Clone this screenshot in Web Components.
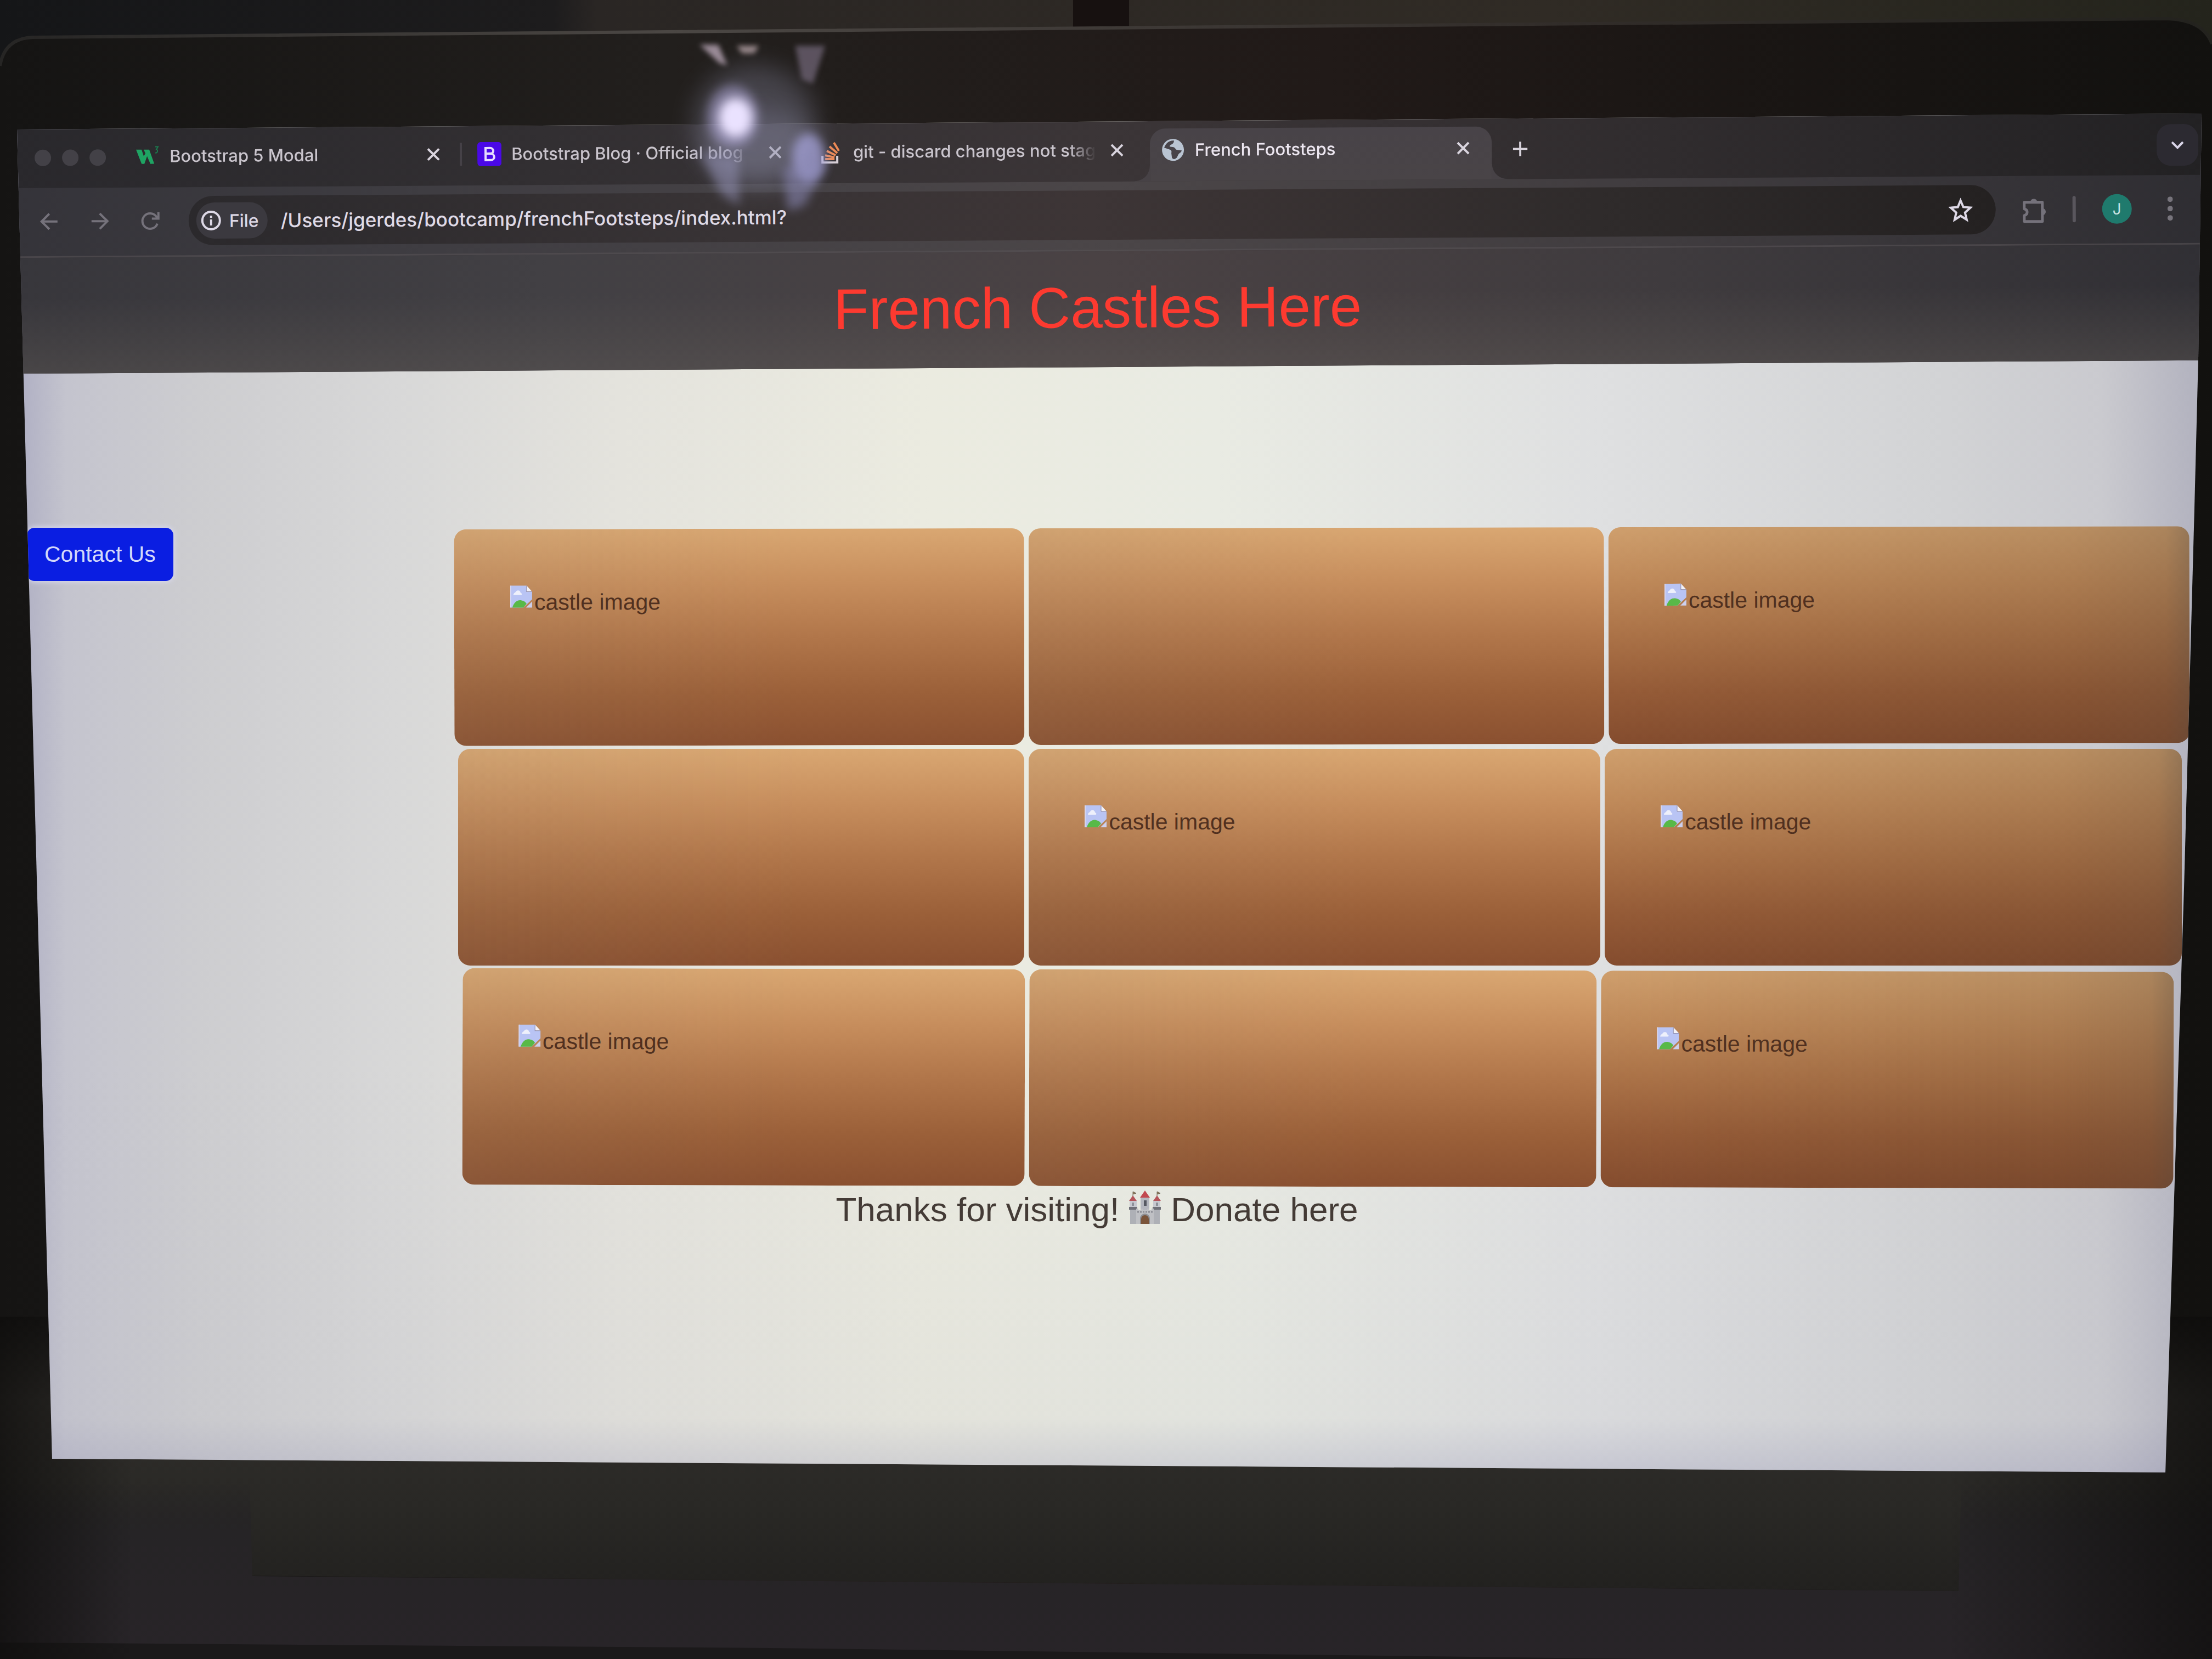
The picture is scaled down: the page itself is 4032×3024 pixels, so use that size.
<!DOCTYPE html>
<html lang="en">
<head>
<meta charset="utf-8">
<title>French Footsteps</title>
<style>
  html, body { margin: 0; }
  body { background: #161311; font-family: "Liberation Sans", Arial, sans-serif; color: #453b36; }
</style>
</head>
<body>
<laptop-scene>
  <laptop-screen>
    <browser-chrome slot="chrome">
      <browser-tab slot="tabs" icon="w3">Bootstrap 5 Modal</browser-tab>
      <browser-tab slot="tabs" icon="bootstrap" divided>Bootstrap Blog · Official blog</browser-tab>
      <browser-tab slot="tabs" icon="stack">git - discard changes not staged</browser-tab>
      <browser-tab slot="tabs" icon="globe" active>French Footsteps</browser-tab>
      <site-header slot="header">French Castles Here</site-header>
    </browser-chrome>
    <castle-page>
      <contact-button slot="aside">Contact Us</contact-button>
      <castle-row tilt="up">
        <castle-card alt="castle image"></castle-card>
        <castle-card></castle-card>
        <castle-card alt="castle image" dim></castle-card>
      </castle-row>
      <castle-row narrow="1">
        <castle-card></castle-card>
        <castle-card alt="castle image"></castle-card>
        <castle-card alt="castle image" dim></castle-card>
      </castle-row>
      <castle-row narrow="2" tilt="down">
        <castle-card alt="castle image"></castle-card>
        <castle-card></castle-card>
        <castle-card alt="castle image" dim></castle-card>
      </castle-row>
      <site-footer slot="footer"></site-footer>
    </castle-page>
  </laptop-screen>
</laptop-scene>

<script>
const define = (name, html, setup) => {
  const template = document.createElement('template');
  template.innerHTML = html;
  customElements.define(name, class extends HTMLElement {
    constructor() {
      super();
      this.attachShadow({ mode: 'open' }).append(template.content.cloneNode(true));
    }
    connectedCallback() { if (setup) setup(this, this.shadowRoot); }
  });
};

const ICONS = {
  w3: `<svg viewBox="0 0 44 44"><path d="M1 10h10l4 12 3-5-3-7h10l9 26h-7l-6-14-5 14h-5z" fill="#1fa463"/><path d="M36 5h5l-3 5c3 0 3 7-2 6" fill="none" stroke="#1b7a4e" stroke-width="2"/></svg>`,
  bootstrap: `<svg viewBox="0 0 44 44"><rect width="44" height="44" rx="6" fill="#4a08e8"/><path d="M15 11h8c8 0 8 10 1 10h-9 9c9 1 9 12 0 12h-9z" fill="none" stroke="#e6dcff" stroke-width="4"/></svg>`,
  stack: `<svg viewBox="0 0 44 44"><path d="M6 29v12h27V29" fill="none" stroke="#d8cfd6" stroke-width="4"/><g stroke="#ef8a55" stroke-width="4"><path d="M11 35h17M11 28l17 4M14 20l16 8M19 12l14 12M27 5l9 15"/></g></svg>`,
  globe: `<svg viewBox="0 0 44 44"><circle cx="22" cy="22" r="20" fill="#b9c4d2"/><path d="M24 5c-8-1-15 4-18 13l9 3c4 1 5 3 4 7l1 8c2 4 6 3 9 0l3-6c2-3 5-3 6-7l-8-1c-4 0-3-4-7-5l-7-1c0-5 8-3 8-11z" fill="#474349"/></svg>`
};

define('laptop-scene', `
<style>
  :host { display: flex; flex-direction: column; position: relative; min-height: 100vh; overflow: hidden; box-sizing: border-box; padding-top: 207px; isolation: isolate; }
  .desk { position: absolute; inset: 0; width: 100%; height: 100%; z-index: -1; }
  .glare { position: absolute; left: 28%; top: 2%; width: 15%; height: 13%; pointer-events: none; }
</style>
<svg class="desk" viewBox="0 0 4032 3024" preserveAspectRatio="none" aria-hidden="true">
  <defs>
    <linearGradient id="wall"><stop offset="0" stop-color="#151618"/><stop offset=".25" stop-color="#1d1c1d"/><stop offset=".27" stop-color="#2a2624"/><stop offset=".7" stop-color="#302b25"/><stop offset="1" stop-color="#24241c"/></linearGradient>
    <linearGradient id="lid"><stop offset="0" stop-color="#151413"/><stop offset=".3" stop-color="#221f1d"/><stop offset=".6" stop-color="#211a18"/><stop offset="1" stop-color="#12110f"/></linearGradient>
    <linearGradient id="rim"><stop offset="0" stop-color="#262524"/><stop offset=".3" stop-color="#4b4744"/><stop offset=".7" stop-color="#322d2a"/><stop offset="1" stop-color="#23221e"/></linearGradient>
    <linearGradient id="chin" x2="0" y2="1"><stop offset="0" stop-color="#302e2b" stop-opacity="0"/><stop offset=".3" stop-color="#302e2b"/><stop offset=".7" stop-color="#292825"/><stop offset="1" stop-color="#22211f"/></linearGradient>
    <linearGradient id="base" x2="0" y2="1"><stop offset="0" stop-color="#242224" stop-opacity="0"/><stop offset=".3" stop-color="#262426"/><stop offset="1" stop-color="#282428"/></linearGradient>
    <linearGradient id="sides"><stop offset="0" stop-color="#0d0c0b" stop-opacity=".7"/><stop offset=".06" stop-color="#0d0c0b" stop-opacity="0"/><stop offset=".88" stop-color="#0d0c0b" stop-opacity="0"/><stop offset="1" stop-color="#0d0c0b" stop-opacity=".7"/></linearGradient>
  </defs>
  <rect width="4032" height="3024" fill="url(#wall)"/>
  <path d="M1956 0h102v50h-102z" fill="#171110"/>
  <path d="M0 3024V120Q8 68 60 66L3950 32Q4016 34 4032 80V3024z" fill="url(#lid)"/>
  <path d="M0 120Q8 70 60 68L3950 34Q4016 36 4032 80" fill="none" stroke="url(#rim)" stroke-width="6"/>
  <path d="M0 2400H4032V2903L3570 2900 460 2872 0 2868z" fill="url(#chin)"/>
  <path d="M0 2700L455 2700 460 2873 3570 2900 3575 2700 4032 2700V3024H0z" fill="url(#base)"/>
  <path d="M0 2994L1400 3004 3000 3024H0z" fill="#1b191a"/>
  <path d="M0 2400H4032V3024H0z" fill="url(#sides)"/>
</svg>
<slot></slot>
<svg class="glare" viewBox="0 0 600 400" preserveAspectRatio="none" aria-hidden="true">
  <defs>
    <filter id="soft" x="-1" y="-1" width="3" height="3"><feGaussianBlur stdDeviation="9"/></filter>
    <filter id="tiny" x="-1" y="-1" width="3" height="3"><feGaussianBlur stdDeviation="5"/></filter>
    <filter id="wide" x="-1" y="-1" width="3" height="3"><feGaussianBlur stdDeviation="22"/></filter>
  </defs>
  <ellipse cx="245" cy="165" rx="110" ry="105" fill="#8f90aa" opacity=".32" filter="url(#wide)"/>
  <ellipse cx="255" cy="215" rx="100" ry="75" fill="#8f90aa" opacity=".3" filter="url(#wide)"/>
  <ellipse cx="205" cy="155" rx="46" ry="58" fill="#b0a8da" opacity=".5" filter="url(#soft)"/>
  <ellipse cx="210" cy="157" rx="30" ry="36" fill="#eae2ff" filter="url(#soft)"/>
  <ellipse cx="342" cy="232" rx="30" ry="46" fill="#aaa8e2" opacity=".7" filter="url(#soft)"/>
  <path d="M145 220l70 10 2 90-32-20z" fill="#9a98be" opacity=".5" filter="url(#soft)"/>
  <path d="M295 250l80-10-40 80-30 10z" fill="#8f8dbb" opacity=".55" filter="url(#soft)"/>
  <path d="M145 22h34l16 38-14-4z" fill="#b8a6b6" opacity=".8" filter="url(#tiny)"/>
  <path d="M212 24h40l-8 14h-22z" fill="#b3a0a4" opacity=".8" filter="url(#tiny)"/>
  <path d="M318 24h54l-22 70-20-8z" fill="#75697c" opacity=".7" filter="url(#tiny)"/>
</svg>`);

define('laptop-screen', `
<style>
  :host {
    display: flex; flex-direction: column; overflow: hidden;
    clip-path: polygon(31px 29px, calc(100% - 19px) 0, calc(100% - 25px) 18%, calc(100% - 32px) 29%, calc(100% - 51px) 57%, calc(100% - 85px) 100%, 95px calc(100% - 25px));
    background:
      linear-gradient(to bottom, rgba(190,190,200,0) 70%, rgba(180,180,190,.14) 96%, rgba(150,150,180,.35)),
      linear-gradient(to right, #b0b0c4 1%, #c4c4ce 3%, #cdcdd0 9%, #d8d8d8 18%, #e4e3dd 28%, #ebebe0 42%, #e9ebe3 55%, #dfe0e1 72%, #d2d3d5 88%, #cacacf 95%, #b4b4c0 99%);
  }
</style>
<slot name="chrome"></slot><slot></slot>`);

define('browser-chrome', `
<style>
  :host { display: block; transform: rotate(-0.35deg); margin: -20px -20px 0; padding-top: 20px; font-family: Inter, Roboto, sans-serif;
    background: linear-gradient(to right, #29282c, #322f32 25%, #3b3537 50%, #302c2e 75%, #222123);
    --bar: linear-gradient(to right, #343339, #3f3d42 20%, #4b4648 50%, #403c3f 75%, #2e2d32);
  }
  button { appearance: none; border: 0; background: none; padding: 0; margin: 0; display: grid; place-items: center; flex: none; color: inherit; }
  svg { display: block; fill: none; stroke: currentColor; stroke-width: 4; }
  .strip { display: flex; align-items: stretch; padding: 14px 44px 0 84px; height: 110px; }
  .lights { display: flex; align-items: center; gap: 20px; margin-right: 34px; }
  .lights i { width: 30px; height: 30px; border-radius: 50%; background: #434147; }
  .add { width: 104px; color: #d8d3dc; }
  .search { margin-left: auto; align-self: center; width: 76px; height: 76px; border-radius: 26px; background: #2c2a31; color: #d8d3e6; }
  .bar { display: flex; align-items: center; gap: 48px; padding: 16px 74px 18px 88px; background: var(--bar); border-bottom: 3px solid #57525599; color: #75727b; }
  .bar button { width: 44px; height: 44px; }
  .omni { flex: 1; display: flex; align-items: center; height: 90px; border-radius: 45px; padding: 0 42px 0 14px; gap: 24px; color: #ddd8e6;
    background: linear-gradient(to right, #2b292c, #383335 30%, #3d3536 50%, #2f2b2b 78%, #242121); }
  .chip { display: flex; align-items: center; gap: 14px; height: 66px; padding: 0 16px 0 8px; border-radius: 33px; background: #3b393f; font-size: 32px; font-weight: 500; }
  input { flex: 1; min-width: 0; border: 0; background: none; padding: 0; font: 500 35px/48px Inter, Roboto, sans-serif; color: #dfdae6; outline: 0; }
  .rule { width: 6px; height: 48px; border-radius: 3px; background: #59565d; }
  .bar .avatar { width: 54px; height: 54px; border-radius: 50%; background: #1f7a6d; color: #c9e2e0; font: 400 28px/32px Inter, sans-serif; }
</style>
<div class="strip">
  <div class="lights"><i></i><i></i><i></i></div>
  <slot name="tabs"></slot>
  <button class="add" aria-label="New tab"><svg width="30" height="30" viewBox="0 0 32 32"><path d="M16 2v28M2 16h28"/></svg></button>
  <button class="search" aria-label="Search tabs"><svg width="28" height="28" viewBox="0 0 28 28"><path d="M4 9l10 10L24 9"/></svg></button>
</div>
<div class="bar">
  <button aria-label="Back"><svg width="34" height="34" viewBox="0 0 34 34"><path d="M32 17H4M17 3L3 17l14 14"/></svg></button>
  <button aria-label="Forward"><svg width="34" height="34" viewBox="0 0 34 34"><path d="M2 17h28M17 3l14 14-14 14"/></svg></button>
  <button aria-label="Reload"><svg width="38" height="38" viewBox="0 0 38 38"><path d="M32 24a14 14 0 1 1-2-13l4 4M34 3v12H22"/></svg></button>
  <div class="omni">
    <span class="chip"><svg width="38" height="38" viewBox="0 0 38 38"><circle cx="19" cy="19" r="16"/><path d="M19 17v11M19 10v4"/></svg>File</span>
    <input type="text" aria-label="Address" value="/Users/jgerdes/bootcamp/frenchFootsteps/index.html?">
    <button aria-label="Bookmark"><svg width="44" height="44" viewBox="0 0 44 44"><path d="M22 5l5 12 13 1-10 9 3 13-11-7-11 7 3-13-10-9 13-1z"/></svg></button>
  </div>
  <button aria-label="Extensions"><svg width="46" height="50" viewBox="0 0 46 50" stroke-linejoin="round"><path d="M4 9H37V44H4V33c7-2 7-10 0-12z" stroke-width="5"/><path d="M16 7a6 6 0 0 1 11 0zM39 21a6 6 0 0 1 0 11z" fill="currentColor" stroke-width="1"/></svg></button>
  <span class="rule"></span>
  <button class="avatar" aria-label="Profile">J</button>
  <button aria-label="Menu"><svg width="10" height="44" viewBox="0 0 10 44"><g fill="#77747c" stroke="none"><circle cx="5" cy="5" r="5"/><circle cx="5" cy="22" r="5"/><circle cx="5" cy="39" r="5"/></g></svg></button>
</div>
<slot name="header"></slot>`);

define('browser-tab', `
<style>
  :host { --tab: #474246; display: flex; align-items: center; gap: 18px; box-sizing: border-box; width: 623px; min-width: 0; height: 96px; align-self: flex-end; padding: 0 40px 18px 20px; position: relative; font-size: 31px; line-height: 40px; font-weight: 500; color: #c9c4cc; }
  :host([active]) { padding-right: 32px; background: linear-gradient(#484348, #494447); border-radius: 28px 28px 0 0; color: #ece6f0; }
  :host([active])::before, :host([active])::after { content: ""; position: absolute; bottom: 0; width: 28px; height: 28px; }
  :host([active])::before { right: 100%; background: radial-gradient(circle at 0 0, transparent 27px, var(--tab) 28px); }
  :host([active])::after { left: 100%; background: radial-gradient(circle at 100% 0, transparent 27px, var(--tab) 28px); }
  :host([divided])::before { content: ""; position: absolute; left: -12px; top: 18px; width: 4px; height: 42px; background: #454147; }
  .icon, .icon svg { display: block; width: 44px; height: 44px; flex: none; }
  .title { flex: 1; min-width: 0; overflow: hidden; white-space: nowrap; -webkit-mask-image: linear-gradient(to right, #000 calc(100% - 50px), transparent); mask-image: linear-gradient(to right, #000 calc(100% - 50px), transparent); }
  button { appearance: none; border: 0; background: none; padding: 0; width: 40px; height: 40px; display: grid; place-items: center; color: #d9d4de; }
</style>
<span class="icon"></span><span class="title"><slot></slot></span>
<button aria-label="Close tab"><svg width="24" height="24" viewBox="0 0 24 24" fill="none" stroke="currentColor" stroke-width="4"><path d="M2 2l20 20M22 2L2 22"/></svg></button>`,
(host, root) => { root.querySelector('.icon').innerHTML = ICONS[host.getAttribute('icon')]; });

define('site-header', `
<style>
  :host { display: block; padding: 42px 32px 47px 0; text-align: center; font-family: "Liberation Sans", Arial, sans-serif;
    background: linear-gradient(to bottom, rgba(90,84,80,0) 35%, rgba(98,92,88,.4)), linear-gradient(to right, #37363b, #424044 25%, #4a4244 50%, #3f3b3e 75%, #302f34); }
  h1 { margin: 0; font-size: 105px; line-height: 122px; font-weight: 400; color: #fd3a30; }
</style>
<h1><slot></slot></h1>`);

define('castle-page', `
<style>
  :host { display: block; flex: 1; padding: 293px 0 0 49px; }
  main { display: flex; align-items: flex-start; justify-content: space-between; min-height: 1201px; }
  .grid { width: 79.4%; margin-right: 42px; display: flex; flex-direction: column; gap: 8px; }
  footer { min-height: 521px; padding-right: 82px; }
</style>
<main><slot name="aside"></slot><div class="grid"><slot></slot></div></main>
<footer><slot name="footer"></slot></footer>`);

define('castle-row', `
<style>
  :host { display: grid; grid-template-columns: 1039fr 1048fr 1058fr; gap: 8px; }
  :host([narrow="1"]) { margin: 0 13px 0 7px; }
  :host([narrow="2"]) { margin: 0 28px 0 15px; }
  :host([tilt="up"]) { transform: rotate(-0.1deg); }
  :host([tilt="down"]) { transform: rotate(0.13deg); }
</style>
<slot></slot>`);

define('castle-card', `
<style>
  :host { display: block; box-sizing: border-box; height: 395px; padding: 102px; border-radius: 22px;
    background: linear-gradient(to right, rgba(140,130,110,.12), transparent 60%), linear-gradient(to bottom, #d9a772, #c78e5d 25%, #b1764a 50%, #9b6039 76%, #8a5030); }
  :host([dim]) { background: linear-gradient(to right, rgba(70,60,45,0), rgba(70,55,38,.16) 80%, rgba(80,65,50,.28) 96%, rgba(80,70,60,.45)), linear-gradient(to bottom, #cf9f6d, #bf8959 25%, #ab7247 50%, #955b37 76%, #844c2e); }
  figure { margin: 0; display: flex; align-items: flex-start; gap: 2px; }
  figure[hidden] { display: none; }
  svg { width: 42px; height: 42px; flex: none; }
  figcaption { font-size: 41px; line-height: 62px; color: #50301f; white-space: nowrap; }
</style>
<figure hidden>
  <svg viewBox="0 0 42 42" aria-hidden="true">
    <path d="M1 1h29l10 11v14L24 41H1z" fill="#b9c4f4"/><path d="M40 30v11H29z" fill="#cdd0ee"/>
    <path d="M30 1v11h10z" fill="#f3f1f6"/><path d="M30 1v11h10" fill="none" stroke="#8a86a4" stroke-width="1"/>
    <path d="M6 18c0-4 4-4 5-7 4-3 8 0 8 3 3 1 3 4 1 4z" fill="#eef0fb"/>
    <path d="M4 41c3-10 10-15 17-13 5 1 7 3 9 6l-6 7z" fill="#58b948"/>
    <path d="M1 1v40" stroke="#d7d6ee" stroke-width="2"/>
  </svg>
  <figcaption></figcaption>
</figure>`,
(host, root) => {
  const alt = host.getAttribute('alt');
  root.querySelector('figure').hidden = !alt;
  root.querySelector('figcaption').textContent = alt || '';
});

define('contact-button', `
<style>
  :host { display: block; }
  button { appearance: none; border: 0; border-radius: 14px; padding: 0 32px; font: 400 41px/97px "Liberation Sans", Arial, sans-serif; color: #d3d8fa; background: #0a1ee2; box-shadow: 0 0 8px 2px #d8d8ee; display: block; }
</style>
<button type="button"><slot></slot></button>`);

define('site-footer', `
<style>
  :host { display: flex; justify-content: center; gap: 17px; font-size: 62px; line-height: 84px; color: #443b36; }
  a { color: inherit; text-decoration: none; }
  svg { width: 60px; height: 62px; margin-top: 7px; }
</style>
<span>Thanks for visiting!</span>
<svg viewBox="0 0 60 62" role="img" aria-label="castle">
  <path d="M3 32h13v29H3zM44 32h13v29H44z" fill="#aeb0b6"/>
  <path d="M2 18h13v14H2zM45 18h13v14H45z" fill="#c6c8cf"/>
  <path d="M1 30h15v5H1zM44 30h15v5H44z" fill="#6f7078"/>
  <path d="M8 9l7 10H1zM52 9l7 10H45z" fill="#b5545a"/>
  <path d="M8 10V2l6 3-6 2M52 10V2l6 3-6 2" fill="#8a7a58" stroke="#75695a" stroke-width="1"/>
  <path d="M22 12h16v24H22z" fill="#b4b6be"/><path d="M30 0l9 13H21z" fill="#c2474f"/>
  <path d="M28 18h5v10h-5z" fill="#565962"/><path d="M6 22h4v6H6zM50 22h4v6h-4z" fill="#8d9099"/>
  <path d="M14 33h4v3h4v-3h4v3h8v-3h4v3h4v-3h4v28H14z" fill="#bfc0c4"/>
  <path d="M16 39h28" stroke="#8b8c93" stroke-width="3" stroke-dasharray="3 2"/>
  <path d="M21 61V51a9 9 0 0 1 18 0v10z" fill="#8d8e92"/><path d="M23 61V52a7 7 0 0 1 14 0v9z" fill="#7a543a"/>
</svg>
<a href="#donate">Donate here</a>`);
</script>
</body>
</html>
